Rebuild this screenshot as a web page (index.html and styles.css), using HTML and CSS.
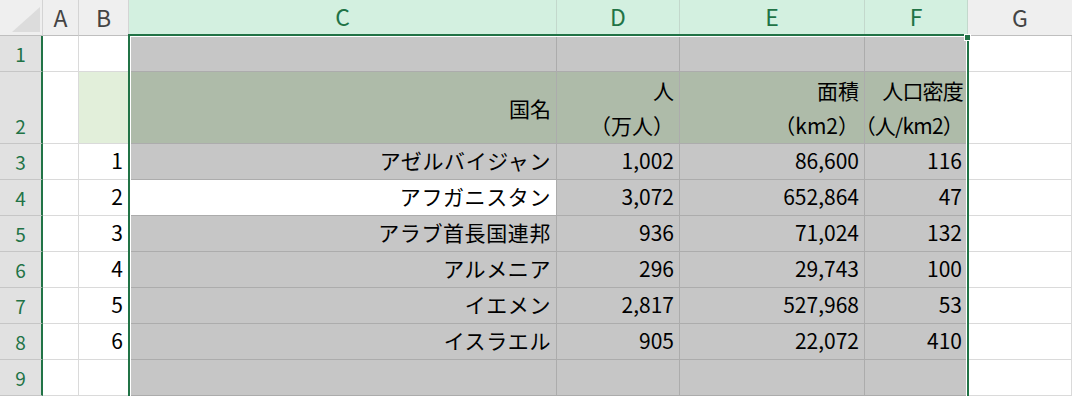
FILE: index.html
```html
<!DOCTYPE html>
<html lang="ja">
<head>
<meta charset="utf-8">
<link rel="stylesheet" href="styles.css">
</head>
<body>
<div class="sheet">
  <div class="grid">
    <div class="corner"><span class="tri"></span></div>
    <div class="ch">A</div>
    <div class="ch">B</div>
    <div class="ch sel">C</div>
    <div class="ch sel">D</div>
    <div class="ch sel">E</div>
    <div class="ch sel">F</div>
    <div class="ch last">G</div>

    <div class="rh">1</div>
    <div class="c"></div><div class="c"></div>
    <div class="c g"></div><div class="c g"></div><div class="c g"></div><div class="c g"></div>
    <div class="c"></div>

    <div class="rh">2</div>
    <div class="c"></div><div class="c lg"></div>
    <div class="c h mid">国名</div>
    <div class="c h mid">人<br>（万人）</div>
    <div class="c h mid">面積<br>（km2）</div>
    <div class="c h mid tight">人口密度<br>（人/km2）</div>
    <div class="c"></div>

    <div class="rh">3</div>
    <div class="c"></div><div class="c">1</div>
    <div class="c g jp">アゼルバイジャン</div><div class="c g">1,002</div><div class="c g">86,600</div><div class="c g">116</div>
    <div class="c"></div>

    <div class="rh">4</div>
    <div class="c"></div><div class="c">2</div>
    <div class="c act jp">アフガニスタン</div><div class="c g">3,072</div><div class="c g">652,864</div><div class="c g">47</div>
    <div class="c"></div>

    <div class="rh">5</div>
    <div class="c"></div><div class="c">3</div>
    <div class="c g jp">アラブ首長国連邦</div><div class="c g">936</div><div class="c g">71,024</div><div class="c g">132</div>
    <div class="c"></div>

    <div class="rh">6</div>
    <div class="c"></div><div class="c">4</div>
    <div class="c g jp">アルメニア</div><div class="c g">296</div><div class="c g">29,743</div><div class="c g">100</div>
    <div class="c"></div>

    <div class="rh">7</div>
    <div class="c"></div><div class="c">5</div>
    <div class="c g jp">イエメン</div><div class="c g">2,817</div><div class="c g">527,968</div><div class="c g">53</div>
    <div class="c"></div>

    <div class="rh">8</div>
    <div class="c"></div><div class="c">6</div>
    <div class="c g jp">イスラエル</div><div class="c g">905</div><div class="c g">22,072</div><div class="c g">410</div>
    <div class="c"></div>

    <div class="rh">9</div>
    <div class="c"></div><div class="c"></div>
    <div class="c g"></div><div class="c g"></div><div class="c g"></div><div class="c g"></div>
    <div class="c"></div>
  </div>
  <div class="selbox"><span class="handle"></span></div>
</div>
</body>
</html>
```

FILE: styles.css
```css
html, body {
  margin: 0;
  padding: 0;
  background: #ffffff;
  overflow: hidden;
}
.sheet {
  position: relative;
  width: 1072px;
  height: 396px;
  overflow: hidden;
  font-family: "Noto Sans CJK JP", "Noto Sans", sans-serif;
}
.grid {
  display: grid;
  grid-template-columns: 43px 36px 50px 428px 123px 185px 103px 104px;
  grid-template-rows: 36px 36px 72px repeat(7, 36px);
}
.corner {
  position: relative;
  background: #efefef;
  border-bottom: 1px solid #bfbfbf;
  border-right: 1px solid #d4d4d4;
}
.tri {
  position: absolute;
  right: 2px;
  bottom: 3px;
  width: 0;
  height: 0;
  border-left: 28px solid transparent;
  border-bottom: 25px solid #dcdcdc;
}
.ch {
  background: #efefef;
  border-right: 1px solid #d4d4d4;
  border-bottom: 1px solid #bfbfbf;
  color: #444444;
  font-size: 23px;
  display: flex;
  align-items: center;
  justify-content: center;
  padding-bottom: 2px;
  box-sizing: border-box;
}
.ch.sel {
  background: #d3f0e0;
  color: #217346;
  border-right-color: #c3d8cc;
  border-bottom: 2px solid #217346;
}
.ch.last {
  border-right: none;
}
.rh {
  background: #e1e1e1;
  border-right: 2px solid #217346;
  border-bottom: 1px solid #c6c6c6;
  color: #217346;
  font-size: 19px;
  line-height: 19px;
  display: flex;
  align-items: flex-end;
  justify-content: center;
  padding-bottom: 8px;
  box-sizing: border-box;
}
.c {
  background: #ffffff;
  border-right: 1px solid #dadada;
  border-bottom: 1px solid #dadada;
  color: #000000;
  font-size: 21px;
  line-height: 21px;
  display: flex;
  align-items: flex-end;
  justify-content: flex-end;
  text-align: right;
  padding: 0 5px 8px 0;
  box-sizing: border-box;
  white-space: nowrap;
}
.c.jp {
  letter-spacing: 0.6px;
  padding-right: 5px;
}
.c.g {
  background: #c6c6c6;
  border-right-color: #acacac;
  border-bottom-color: #acacac;
}
.c.h {
  background: #aebba9;
  border-right-color: #acacac;
  border-bottom-color: #acacac;
}
.c.lg {
  background: #e2efda;
}
.c.act {
  background: #ffffff;
  border-right-color: #acacac;
  border-bottom-color: #acacac;
}
.c.mid {
  align-items: center;
  line-height: 35px;
  padding-bottom: 0;
  padding-top: 1px;
}
.c.tight {
  letter-spacing: -0.8px;
  padding-right: 4px;
}
.selbox {
  position: absolute;
  left: 128px;
  top: 34px;
  width: 837px;
  height: 400px;
  border: 2px solid #217346;
  box-shadow: inset 1px 1px 0 #ffffff, inset -1px 0 0 #ffffff;
  pointer-events: none;
}
.handle {
  position: absolute;
  right: -4px;
  top: -2px;
  width: 5px;
  height: 5px;
  background: #217346;
  border: 1px solid #ffffff;
}
```
